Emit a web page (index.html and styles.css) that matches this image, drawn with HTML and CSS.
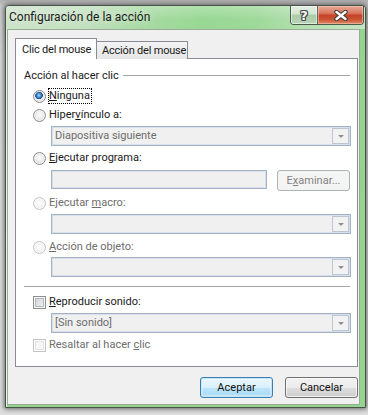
FILE: index.html
```html
<!DOCTYPE html>
<html lang="es">
<head>
<meta charset="utf-8">
<title>Configuración de la acción</title>
<link rel="stylesheet" href="styles.css">
</head>
<body>
<div class="window">
  <div class="titlebar">
    <span class="title">Configuración de la acción</span>
    <div class="caption-btns">
      <div class="cbtn help"><span class="qmark">?</span></div>
      <div class="cbtn close">
        <svg width="14" height="11" viewBox="0 0 14 11">
          <path d="M2.5 2 L11.5 9 M11.5 2 L2.5 9" stroke="#3a3a3a" stroke-width="4.4" stroke-linecap="round" fill="none"/>
          <path d="M2.5 2 L11.5 9 M11.5 2 L2.5 9" stroke="#ffffff" stroke-width="2.4" stroke-linecap="round" fill="none"/>
        </svg>
      </div>
    </div>
  </div>
  <div class="frame-body">
    <div class="client">
      <div class="tabs">
        <div class="tab active">Clic del mouse</div>
        <div class="tab">Acción del mouse</div>
      </div>
      <div class="panel">
        <div class="legend"><span>Acción al hacer clic</span></div>
        <div class="opt mt4"><span class="radio checked"></span><span class="lbl focus"><u>N</u>inguna</span></div>
        <div class="opt mt1"><span class="radio"></span><span class="lbl">Hiper<u>v</u>ínculo a:</span></div>
        <div class="combo mt2"><span class="combo-text">Diapositiva siguiente</span><span class="combo-btn"></span></div>
        <div class="opt mt3"><span class="radio"></span><span class="lbl"><u>E</u>jecutar programa:</span></div>
        <div class="field-row mt3"><span class="field"></span><span class="btn-browse">E<u>x</u>aminar...</span></div>
        <div class="opt mt3 disabled"><span class="radio"></span><span class="lbl">Ejecutar <u>m</u>acro:</span></div>
        <div class="combo mt2"><span class="combo-text"></span><span class="combo-btn"></span></div>
        <div class="opt mt4 disabled"><span class="radio"></span><span class="lbl"><u>A</u>cción de objeto:</span></div>
        <div class="combo mt1"><span class="combo-text"></span><span class="combo-btn"></span></div>
        <div class="sep"></div>
        <div class="opt mt6"><span class="check"></span><span class="lbl"><u>R</u>eproducir sonido:</span></div>
        <div class="combo mt2"><span class="combo-text">[Sin sonido]</span><span class="combo-btn"></span></div>
        <div class="opt mt3 disabled"><span class="check"></span><span class="lbl">Resaltar al hacer <u>c</u>lic</span></div>
      </div>
      <div class="footer">
        <div class="btn default">Aceptar</div>
        <div class="btn">Cancelar</div>
      </div>
    </div>
  </div>
</div>
</body>
</html>
```

FILE: styles.css
```css
* { box-sizing: border-box; }
html, body { margin: 0; }
body {
  width: 368px;
  height: 415px;
  overflow: hidden;
  padding: 5px 0 0 5px;
  background: linear-gradient(#b0b0b0, #c8c8c8 6px, #d9d9d9 60px, #dedede);
  font-family: Roboto, "Liberation Sans", sans-serif;
  font-size: 11px;
  color: #1a1a1a;
  white-space: nowrap;
}

.window {
  width: 361px;
  height: 403px;
  border: 1px solid #46524a;
  border-radius: 4px 4px 0 0;
  background: #93d58f;
  box-shadow: 0 0 5px 1px rgba(0,0,0,0.55);
  display: flex;
  flex-direction: column;
}

.titlebar {
  height: 23px;
  display: flex;
  align-items: flex-start;
  padding-left: 3px;
  border-radius: 3px 3px 0 0;
  background:
    linear-gradient(rgba(255,255,255,0.25), rgba(255,255,255,0) 60%),
    linear-gradient(90deg, #cde3ca 0%, #c2e0bf 22%, #a6daa2 40%, #97d893 55%, #9ed99a 70%, #b7e1b4 85%, #c4e5c1 100%);
}
.title {
  line-height: 23px;
  font-size: 12px;
  color: #1b1b1b;
  text-shadow: 0 0 6px rgba(255,255,255,0.8);
}
.caption-btns {
  margin-left: auto;
  margin-right: 1px;
  display: flex;
  height: 19px;
  border: 1px solid #4a5a4c;
  border-top: none;
  border-radius: 0 0 4px 4px;
  overflow: hidden;
}
.cbtn {
  height: 100%;
  display: flex;
  align-items: center;
  justify-content: center;
}
.help {
  width: 27px;
  border-right: 1px solid #5d6b5e;
  background: linear-gradient(#e4eee3 0%, #d3e5d1 45%, #aac9a7 50%, #b9d7b6 100%);
  box-shadow: inset 0 0 0 1px rgba(255,255,255,0.55);
}
.qmark {
  font-family: "DejaVu Sans", sans-serif;
  font-weight: bold;
  font-size: 13px;
  color: #f6f6f6;
  line-height: 1;
  text-shadow: 1px 0 #4b4b4b, -1px 0 #4b4b4b, 0 1px #4b4b4b, 0 -1px #4b4b4b, 1px 1px #4b4b4b, -1px -1px #4b4b4b, 1px -1px #4b4b4b, -1px 1px #4b4b4b;
}
.close {
  width: 45px;
  background: linear-gradient(#e8a898 0%, #d9785f 40%, #c6432a 52%, #cc5234 75%, #de8a68 100%);
  box-shadow: inset 0 0 0 1px rgba(255,220,200,0.45);
}

.frame-body {
  flex: 1;
  display: flex;
  padding: 0 5px 2px 1px;
  box-shadow: inset 1px 0 0 #e6f3e4;
}
.client {
  width: 353px;
  height: 376px;
  border: 1px solid #9aab98;
  background: #f0f0f0;
  padding: 8px 0 0 7px;
}

.tabs {
  display: flex;
  align-items: flex-end;
  height: 21px;
  margin-bottom: -1px;
}
.tab {
  border: 1px solid #898c95;
  border-bottom: none;
  display: flex;
  align-items: center;
  letter-spacing: -0.2px;
}
.tab.active {
  position: relative;
  z-index: 1;
  width: 82px;
  height: 21px;
  padding-left: 6px;
  background: #ffffff;
}
.tab:not(.active) {
  width: 92px;
  height: 18px;
  margin-left: -1px;
  padding-left: 5px;
  padding-bottom: 1px;
  background: linear-gradient(#f3f3f3, #e6e6e6);
}

.panel {
  width: 343px;
  height: 309px;
  border: 1px solid #898c95;
  background: #ffffff;
  display: flex;
  flex-direction: column;
}

.legend {
  margin-top: 8px;
  height: 16px;
  display: flex;
  align-items: center;
  padding: 0 7px 0 8px;
}
.legend::after {
  content: "";
  flex: 1;
  height: 1px;
  margin-left: 4px;
  background: #a5a5a5;
}

.opt {
  height: 18px;
  display: flex;
  align-items: center;
  padding-left: 17px;
}
.mt1 { margin-top: 1px; }
.mt2 { margin-top: 2px; }
.mt3 { margin-top: 3px; }
.mt4 { margin-top: 4px; }
.mt6 { margin-top: 6px; }

.lbl { margin-left: 3px; line-height: 14px; }
.lbl u { text-underline-offset: 1px; }
.focus {
  margin-left: 2px;
  padding-right: 1px;
  border: 1px dotted #000;
}
.disabled .lbl { color: #6d6d6d; }

.radio {
  width: 13px;
  height: 13px;
  border-radius: 50%;
  border: 1px solid #8c8e90;
  background: radial-gradient(circle at 50% 45%, #fbfbfb 0, #ececec 45%, #cfd1d3 85%, #c2c4c6 100%);
  box-shadow: inset 0 0 0 1px rgba(255,255,255,0.6);
}
.radio.checked {
  background:
    radial-gradient(circle at 45% 40%, #b8dcf8 0, #5e9fd8 1.5px, #2260a3 3px, #1c4f8c 3.6px, rgba(28,79,140,0) 4.1px),
    radial-gradient(circle at 50% 45%, #fbfbfb 0, #ececec 45%, #cfd1d3 85%, #c2c4c6 100%);
}
.disabled .radio {
  border-color: #c3c5c7;
  background: radial-gradient(circle at 50% 45%, #fcfcfc 0, #f2f2f2 55%, #e2e3e4 100%);
}

.check {
  width: 13px;
  height: 13px;
  border: 1px solid #8e8f8f;
  background: linear-gradient(135deg, #c9ccd1 0%, #e1e3e5 50%, #f4f4f4 100%);
  box-shadow: inset 0 0 0 1px #f7f7f7, inset 0 0 0 2px #b4b8bd;
}
.disabled .check {
  border-color: #c4c4c4;
  background: #f7f7f7;
  box-shadow: inset 0 0 0 1px #ffffff, inset 0 0 0 2px #e3e3e3;
}

.combo {
  margin-left: 35px;
  width: 300px;
  height: 20px;
  border: 1px solid #a3b3c7;
  box-shadow: inset 0 0 0 1px #d8dfe8;
  background: #f0f0f0;
  display: flex;
  align-items: stretch;
  padding: 1px;
}
.combo-text {
  flex: 1;
  padding-left: 2px;
  line-height: 16px;
  color: #6d6d6d;
}
.combo-btn {
  width: 17px;
  border: 1px solid #bcc6d2;
  background: #f2f2f2;
  display: flex;
  align-items: center;
  justify-content: center;
}
.combo-btn::before {
  content: "";
  width: 0;
  height: 0;
  border-left: 3.5px solid transparent;
  border-right: 3.5px solid transparent;
  border-top: 3.5px solid #8f8f8f;
  margin-top: 1px;
}

.field-row {
  display: flex;
  align-items: flex-start;
  margin-left: 35px;
  height: 21px;
}
.field {
  width: 216px;
  height: 19px;
  border: 1px solid #a3b3c7;
  box-shadow: inset 0 0 0 1px #d8dfe8;
  background: #f0f0f0;
}
.btn-browse {
  margin-left: 10px;
  width: 73px;
  height: 21px;
  border: 1px solid #adb2b5;
  border-radius: 3px;
  background: #f4f4f4;
  color: #838383;
  display: flex;
  align-items: center;
  justify-content: center;
}

.sep {
  margin: 9px 7px 0 8px;
  height: 1px;
  background: #a5a5a5;
}

.footer {
  width: 343px;
  margin-top: 10px;
  display: flex;
  justify-content: flex-end;
  gap: 12px;
}
.btn {
  width: 73px;
  height: 21px;
  border: 1px solid #707070;
  border-radius: 3px;
  background: linear-gradient(#f2f2f2 0%, #ebebeb 50%, #dddddd 50%, #cfcfcf 100%);
  box-shadow: inset 0 0 0 1px rgba(255,255,255,0.7);
  display: flex;
  align-items: center;
  justify-content: center;
  color: #111;
}
.btn.default {
  border-color: #3c7fb1;
  background: linear-gradient(#eaf6fd 0%, #d9f0fc 50%, #bee6fd 50%, #a7d9f5 100%);
  box-shadow: inset 0 0 0 1px #c2e4f6, inset 0 0 0 2px rgba(255,255,255,0.35);
}
```
